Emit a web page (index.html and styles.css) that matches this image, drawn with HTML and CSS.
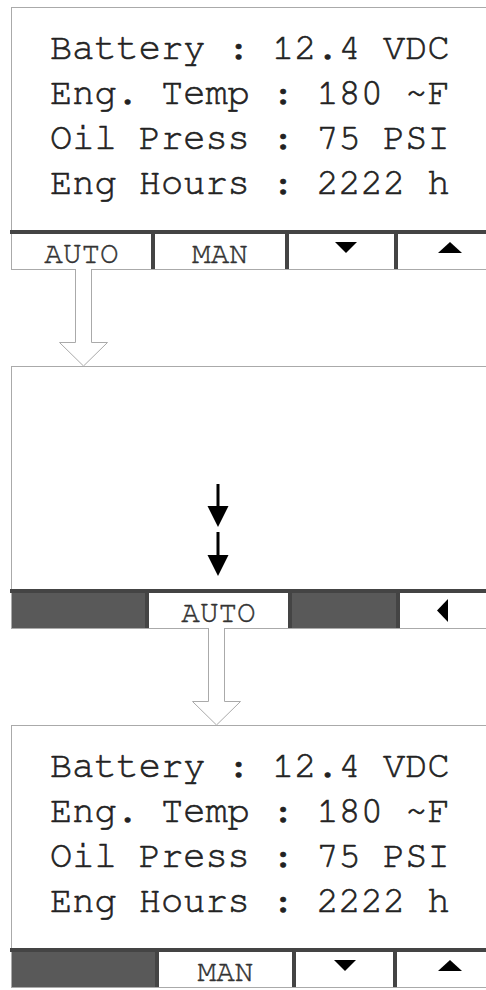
FILE: index.html
```html
<!DOCTYPE html>
<html lang="en">
<head>
  <meta charset="UTF-8">
  <meta name="viewport" content="width=device-width, initial-scale=1.0">
  <title>Engine Panel - AUTO Start</title>
  <link rel="stylesheet" href="styles.css">
</head>
<body>
  <div class="page">

    <!-- status screen -->
    <section class="screen">
      <div class="readout">
        <p>Battery : 12.4 VDC</p>
        <p>Eng. Temp : 180 ~F</p>
        <p>Oil Press : 75 PSI</p>
        <p>Eng Hours : 2222 h</p>
      </div>
      <div class="keys keys-main">
        <div class="key">AUTO</div>
        <div class="key sep">MAN</div>
        <div class="key sep nudge">
          <svg width="22" height="12" viewBox="0 0 22 12"><polygon points="0,0 22,0 11,11" fill="#000"/></svg>
        </div>
        <div class="key sep">
          <svg width="24" height="12" viewBox="0 0 24 12"><polygon points="12,0 24,11 0,11" fill="#000"/></svg>
        </div>
      </div>
    </section>

    <div class="flow flow-left">
      <svg width="50" height="98" viewBox="0 0 50 98"><path d="M16.5 0 V73.5 H0.5 L24.5 97 L48.5 73.5 H32.5 V0" fill="#fff" stroke="#aaa" stroke-width="1"/></svg>
    </div>

    <!-- confirm screen -->
    <section class="screen">
      <div class="readout blank">
        <svg width="22" height="93" viewBox="0 0 22 93">
          <rect x="9.5" y="0" width="3" height="24" fill="#000"/>
          <polygon points="0.5,22 21.5,22 11,43" fill="#000"/>
          <rect x="9.5" y="48" width="3" height="25" fill="#000"/>
          <polygon points="0.5,71 21.5,71 11,92" fill="#000"/>
        </svg>
      </div>
      <div class="keys keys-confirm">
        <div class="key off"></div>
        <div class="key sep">AUTO</div>
        <div class="key sep off"></div>
        <div class="key sep back">
          <svg width="12" height="24" viewBox="0 0 12 24"><polygon points="11,0 11,23 0,11.5" fill="#000"/></svg>
        </div>
      </div>
    </section>

    <div class="flow flow-mid">
      <svg width="50" height="98" viewBox="0 0 50 98"><path d="M16.5 0 V73.5 H0.5 L24.5 97 L48.5 73.5 H32.5 V0" fill="#fff" stroke="#aaa" stroke-width="1"/></svg>
    </div>

    <!-- running in auto -->
    <section class="screen">
      <div class="readout">
        <p>Battery : 12.4 VDC</p>
        <p>Eng. Temp : 180 ~F</p>
        <p>Oil Press : 75 PSI</p>
        <p>Eng Hours : 2222 h</p>
      </div>
      <div class="keys keys-auto">
        <div class="key off"></div>
        <div class="key sep">MAN</div>
        <div class="key sep">
          <svg width="22" height="12" viewBox="0 0 22 12"><polygon points="0,0 22,0 11,11" fill="#000"/></svg>
        </div>
        <div class="key sep">
          <svg width="24" height="12" viewBox="0 0 24 12"><polygon points="12,0 24,11 0,11" fill="#000"/></svg>
        </div>
      </div>
    </section>

  </div>
</body>
</html>
```

FILE: styles.css
```css
html, body {
  margin: 0;
  background: #fff;
  overflow: hidden;
}
.page {
  width: 486px;
  height: 990px;
  overflow: hidden;
  padding: 7px 0 0 11px;
  box-sizing: border-box;
}
.screen {
  width: 490px;
  border: 1px solid #aaa;
  background: #fff;
}
.readout {
  height: 222px;
  box-sizing: border-box;
  padding: 17px 0 0 38px;
  font-family: "Nimbus Mono PS", "FreeMono", "Courier", "Liberation Mono", monospace;
  font-size: 37px;
  line-height: 45px;
  color: #222;
  -webkit-text-stroke: 0.6px #222;
}
.readout p {
  margin: 0;
  white-space: pre;
}
.readout.blank {
  padding: 117px 0 0 195px;
}
.readout.blank svg {
  display: block;
}
.keys {
  display: grid;
  height: 35px;
  border-top: 4px solid #444;
  margin-left: -2px;
  padding-left: 2px;
  font-family: "Nimbus Mono PS", "FreeMono", "Courier", "Liberation Mono", monospace;
  font-size: 31px;
  color: #333;
  -webkit-text-stroke: 0.4px #333;
}
.keys-main {
  grid-template-columns: 139px 134px 109px 1fr;
}
.keys-confirm {
  grid-template-columns: 133px 143px 108px 1fr;
}
.keys-auto {
  grid-template-columns: 143px 137px 101px 1fr;
}
.key {
  display: flex;
  align-items: center;
  justify-content: center;
  height: 35px;
  line-height: 1;
  padding-top: 3px;
  box-sizing: border-box;
  overflow: hidden;
  background: #fff;
}
.key svg {
  display: block;
  margin-top: -10px;
}
.key.sep {
  border-left: 4px solid #444;
}
.key.off {
  background: #595959;
}
.key.nudge {
  padding-left: 8px;
}
.key.back {
  padding-right: 17px;
}
.key.back svg {
  margin-top: -3px;
}
.flow {
  height: 97px;
}
.flow svg {
  display: block;
  margin-top: -1px;
}
.flow-left svg {
  margin-left: 48px;
}
.flow-mid svg {
  margin-left: 181px;
}
```
